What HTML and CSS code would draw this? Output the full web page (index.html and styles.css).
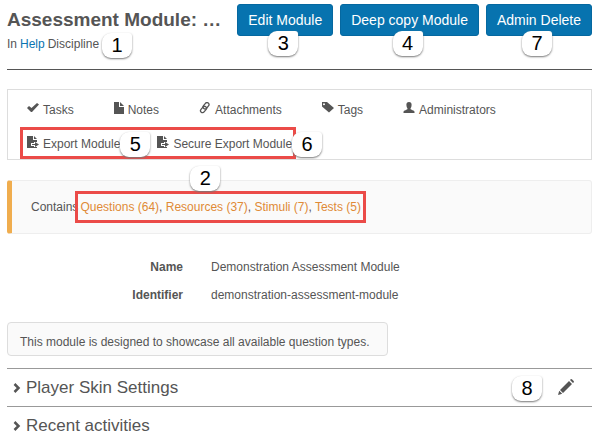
FILE: index.html
```html
<!DOCTYPE html>
<html lang="en">
<head>
<meta charset="utf-8">
<title>Assessment Module</title>
<link rel="stylesheet" href="styles.css">
</head>
<body>
<svg class="sprite" aria-hidden="true">
  <symbol id="file-export" viewBox="0 0 12 12">
    <path fill="currentColor" d="M0 0h6v4h4v2H7v1H4v3h3v1h3v1H0zM7 0l3 3H7z"/>
    <path fill="currentColor" d="M5 8h3V6l4 2.500L8 11V9H5z"/>
  </symbol>
</svg>
<header class="head">
  <div class="head-text">
    <h1>Assessment Module: …</h1>
    <p class="sub">In <a class="blue" href="#">Help</a> Discipline <span class="mark m1">1</span></p>
  </div>
  <div class="actions">
    <div class="action"><button>Edit Module</button><span class="mark">3</span></div>
    <div class="action"><button>Deep copy Module</button><span class="mark">4</span></div>
    <div class="action"><button>Admin Delete</button><span class="mark">7</span></div>
  </div>
</header>
<nav class="tools">
  <div class="tool-row">
    <a href="#"><svg width="12" height="12" viewBox="0 0 12 12"><path fill="currentColor" d="M0 6l2-2 2.500 2L10 1l2 1.500L5 10H4z"/></svg>Tasks</a>
    <a href="#"><svg width="10" height="12" viewBox="0 0 10 12"><path fill="currentColor" d="M0 0h5v5h5v7H0zM6 0l4 4H6z"/></svg>Notes</a>
    <a href="#"><svg width="12" height="12" viewBox="0 0 12 12"><g fill="none" stroke="currentColor" stroke-width="1.300"><rect x="3.500" y="1.800" width="7" height="4" rx="2" transform="rotate(-50 7 3.800)"/><rect x="1" y="5.500" width="7" height="4" rx="2" transform="rotate(-50 4.500 7.500)"/></g></svg>Attachments</a>
    <a href="#"><svg width="12" height="12" viewBox="0 0 12 12"><path fill="currentColor" fill-rule="evenodd" d="M0 0h5l7 6-5 4.500L0 4.500zM2 1.200a1 1 0 1 0 0 2 1 1 0 0 0 0-2z"/></svg>Tags</a>
    <a href="#"><svg width="12" height="12" viewBox="0 0 12 12"><path fill="currentColor" d="M6 0c2 0 3 1.500 2.500 4C8.300 5.500 7.500 6 7.500 7c0 1 4 1 4 3v1H.5v-1c0-2 4-2 4-3 0-1-.8-1.500-1-3C3 1.500 4 0 6 0z"/></svg>Administrators</a>
  </div>
  <div class="exports">
    <a href="#"><svg width="12" height="12"><use href="#file-export"/></svg>Export Module</a><span class="mark m5">5</span>
    <a href="#"><svg width="12" height="12"><use href="#file-export"/></svg>Secure Export Module</a><span class="mark">6</span>
  </div>
</nav>
<section class="contains">
  <span>Contains</span>
  <div class="links"><a href="#">Questions (64)</a>, <a href="#">Resources (37)</a>, <a href="#">Stimuli (7)</a>, <a href="#">Tests (5)</a><span class="mark m2">2</span></div>
</section>
<dl class="details">
  <dt>Name</dt><dd>Demonstration Assessment Module</dd>
  <dt>Identifier</dt><dd>demonstration-assessment-module</dd>
</dl>
<p class="note">This module is designed to showcase all available question types.</p>
<section class="fold">
  <h2><svg width="8" height="10" viewBox="0 0 8 10"><path fill="none" stroke="currentColor" stroke-width="2.500" d="M1.500 1L5.500 5l-4 4"/></svg>Player Skin Settings</h2>
  <div class="edit"><span class="mark">8</span><button class="pencil" aria-label="Edit player skin settings"><svg width="16" height="16" viewBox="0 0 16 16"><path fill="currentColor" d="M0 16l1.200-4.300 3 3zM2 11L11 2l3 3-9 9zM12 1l1-1c1 0 3 2 3 3l-1 1z"/></svg></button></div>
</section>
<section class="fold">
  <h2><svg width="8" height="10" viewBox="0 0 8 10"><path fill="none" stroke="currentColor" stroke-width="2.500" d="M1.500 1L5.500 5l-4 4"/></svg>Recent activities</h2>
</section>
</body>
</html>
```
FILE: styles.css
```css
* { box-sizing: border-box; }
body {
  margin: 0;
  padding: 4px 8px 0 7px;
  background: #fff;
  color: #555;
  font: 12px/16px "Liberation Sans", Arial, sans-serif;
}
h1, h2, p, dl, dd { margin: 0; }
a { color: inherit; text-decoration: none; }
.sprite { display: none; }
.head {
  display: flex;
  justify-content: space-between;
  height: 66px;
  border-bottom: 1px solid #555;
}
.head-text { flex: none; }
h1 { font-size: 19px; line-height: 32px; white-space: nowrap; }
.sub { display: flex; gap: 3px; }
.blue { color: #0a74b0; }
.actions { display: flex; gap: 7px; }
.action { position: relative; }
button { font: inherit; border: 0; cursor: pointer; }
.action button {
  height: 32px;
  padding: 0 10px;
  border: 1px solid #0568a0;
  border-radius: 3px;
  background: #0773af;
  color: #fff;
  font-size: 14px;
  white-space: nowrap;
}
.mark {
  flex: none;
  display: block;
  width: 30px;
  height: 25px;
  border-radius: 9px 3px 9px 9px;
  background: #fff;
  box-shadow: 0 1px 2px #777;
  color: #000;
  font-size: 20px;
  line-height: 25px;
  text-align: center;
}
.action .mark { position: absolute; top: 27px; left: calc(50% - 17px); }
.m1 { margin-top: -3px; }
.tools {
  margin-top: 19px;
  height: 71px;
  padding: 12px 12px 0;
  border: 1px solid #ddd;
}
.tool-row { display: flex; gap: 40px; padding-left: 7px; }
.tools a { display: flex; gap: 4px; white-space: nowrap; }
.exports {
  display: flex;
  align-items: center;
  width: 276px;
  height: 32px;
  margin-top: 9px;
  padding: 2px 0 0 4px;
  border: 3px solid #eb4b48;
}
.exports a { flex: none; }
.m5 { margin-right: 7px; }
.contains {
  display: flex;
  align-items: center;
  margin-top: 20px;
  height: 54px;
  padding-left: 19px;
  border: 1px solid #eee;
  border-left: 5px solid #f0ad4e;
  border-radius: 3px;
  background: #fafafa;
}
.links {
  position: relative;
  margin-left: -3px;
  height: 32px;
  padding: 5px 2px;
  border: 3px solid #eb4b48;
  white-space: nowrap;
}
.links a { color: #e08a36; }
.m2 { position: absolute; left: 112px; top: -28px; }
.details {
  display: grid;
  grid-template-columns: 176px 1fr;
  gap: 12px 28px;
  margin-top: 25px;
}
dt { font-weight: bold; text-align: right; }
.note {
  width: fit-content;
  margin: 19px 0 12px;
  padding: 11px 17px 5px 12px;
  border: 1px solid #ddd;
  border-radius: 4px;
  background: #fafafa;
}
.fold {
  display: flex;
  justify-content: space-between;
  height: 38px;
  padding: 7px 18px 0 6px;
  border-top: 1px solid #999;
}
h2 { display: flex; align-items: center; gap: 5px; height: 24px; font-size: 17px; font-weight: normal; }
.edit { display: flex; gap: 16px; }
.pencil { height: 16px; margin-top: 3px; padding: 0; background: none; color: #555; }
```
